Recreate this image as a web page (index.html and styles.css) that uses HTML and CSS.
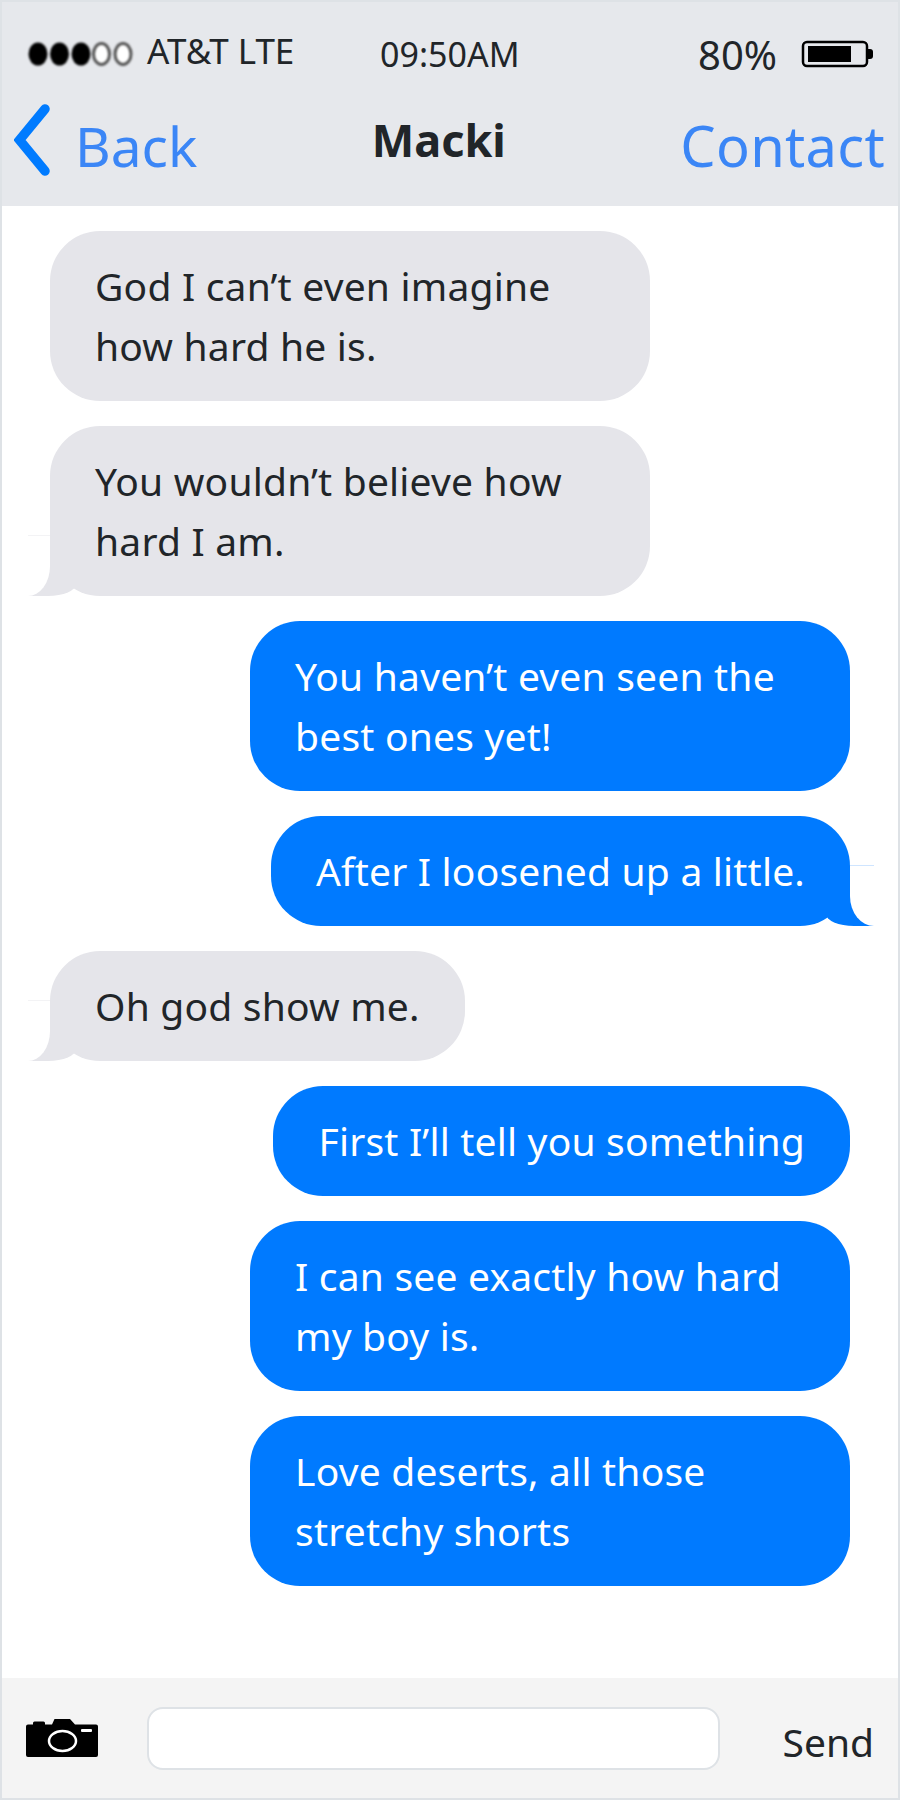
FILE: index.html
```html
<!DOCTYPE html>
<html>
<head>
<meta charset="utf-8"/>
<title>Macki</title>
<link rel="stylesheet" href="styles.css">
</head>
<body>
<div class="phone">

<div class="top">
  <div class="status">
    <div class="carrier">
      <svg class="dots" width="106" height="28" viewBox="0 0 106 28">
        <ellipse cx="11" cy="14" rx="9.5" ry="11.5"/>
        <ellipse cx="32.5" cy="14" rx="9.5" ry="11.5"/>
        <ellipse cx="54" cy="14" rx="9.5" ry="11.5"/>
        <ellipse class="off" cx="74.5" cy="14" rx="8" ry="10.5"/>
        <ellipse class="off" cx="96" cy="14" rx="8" ry="10.5"/>
      </svg>
      <span>AT&amp;T LTE</span>
    </div>
    <div class="time">09:50AM</div>
    <div class="power">
      <span>80%</span>
      <svg width="72" height="28" viewBox="0 0 72 28">
        <rect x="2" y="2" width="64" height="24" rx="4" fill="none" stroke="#000" stroke-width="2.5"/>
        <rect x="7" y="6" width="43" height="16"/>
        <path d="M67 9h2a3 3 0 0 1 3 3v4a3 3 0 0 1-3 3h-2z"/>
      </svg>
    </div>
  </div>
  <div class="nav">
    <a class="back">
      <svg width="38" height="74" viewBox="0 0 38 74">
        <path d="M31 6 L5.500 37 L31 68" fill="none" stroke="#007bff" stroke-width="9.500" stroke-linecap="round" stroke-linejoin="miter"/>
      </svg>
      <span>Back</span>
    </a>
    <div class="name">Macki</div>
    <a class="contact">Contact</a>
  </div>
</div>

<div class="chat">
  <p class="msg them">God I can’t even imagine how hard he is.</p>
  <p class="msg them tail">You wouldn’t believe how hard I am.</p>
  <p class="msg me">You haven’t even seen the best ones yet!</p>
  <p class="msg me tail">After I loosened up a little.</p>
  <p class="msg them tail">Oh god show me.</p>
  <p class="msg me">First I’ll tell you something</p>
  <p class="msg me">I can see exactly how hard my boy is.</p>
  <p class="msg me">Love deserts, all those stretchy shorts</p>
</div>

<div class="bottom">
  <svg class="camera" width="72" height="38" viewBox="0 0 72 38">
    <path d="M2 5.500h5V4a1.500 1.500 0 0 1 1.500-1.500h9A1.500 1.500 0 0 1 19 4v1.500h7L28.500 0H44l5 5.500h21a2 2 0 0 1 2 2V36a2 2 0 0 1-2 2H2a2 2 0 0 1-2-2V7.500a2 2 0 0 1 2-2z"/>
    <ellipse cx="36.500" cy="22" rx="13.500" ry="10" fill="none" stroke="#fff" stroke-width="2.500"/>
    <rect x="55" y="10" width="11" height="3" rx="1" fill="#fff"/>
  </svg>
  <input class="box" type="text">
  <div class="send">Send</div>
</div>

</div>
</body>
</html>
```

FILE: styles.css
```css
* {
   box-sizing: border-box;
}

html, body {
   margin: 0;
   padding: 0;
   background-color: white;
}

body {
   font-family: "Noto Sans", "Open Sans", sans-serif;
   color: #212529;
}

.phone {
   display: flex;
   flex-direction: column;
   width: 900px;
   height: 1800px;
   border: 2px solid #dee2e6;
}

/* top bar */
.top {
   height: 204px;
   background-color: #e6e8ec;
}

.status {
   display: grid;
   grid-template-columns: 353px 1fr auto;
   align-items: center;
   height: 96px;
   padding: 8px 25px 0 25px;
}

.carrier {
   display: flex;
   align-items: center;
   gap: 14px;
   font-size: 35px;
}

.carrier span {
   padding-bottom: 8px;
}

.dots {
   filter: blur(0.8px);
}

.dots .off {
   fill: white;
   stroke: #555;
   stroke-width: 3;
}

.time {
   font-size: 34px;
}

.power {
   display: flex;
   align-items: center;
   gap: 24px;
   font-size: 40px;
}

.nav {
   display: flex;
   justify-content: space-between;
   align-items: center;
   height: 88px;
   padding: 0 13px 0 12px;
}

.back {
   display: flex;
   align-items: center;
   gap: 23px;
}

.back svg {
   margin-bottom: 4px;
}

.back span {
   padding-top: 6px;
}

.back, .contact {
   font-size: 55px;
   color: #3b86f6;
}

.contact {
   padding-top: 6px;
   font-size: 56px;
   letter-spacing: 0.3px;
}

.name {
   font-size: 45px;
   font-weight: bold;
   padding-bottom: 6px;
}

/* messages */
.chat {
   flex: 1;
   display: flex;
   flex-direction: column;
   gap: 25px;
   padding: 25px 48px 0;
}

.msg {
   position: relative;
   width: fit-content;
   max-width: 600px;
   margin: 0;
   padding: 25px 45px;
   border-radius: 50px;
   font-size: 39px;
   line-height: 60px;
   letter-spacing: 0.2px;
}

.them {
   align-self: flex-start;
   background-color: #e5e5ea;
}

.me {
   align-self: flex-end;
   background-color: #007aff;
   color: white;
}

/* bubble tail */
.tail::before, .tail::after {
   content: "";
   position: absolute;
   bottom: 0;
   height: 60px;
}

.them.tail::before {
   left: -22px;
   width: 48px;
   border-bottom-right-radius: 28px 12px;
   background-color: #e5e5ea;
}

.them.tail::after {
   left: -22px;
   width: 22px;
   background-color: white;
   border-top: 1px solid #f3f3f5;
   border-bottom-right-radius: 22px 30px;
}

.me.tail::before {
   right: -24px;
   width: 48px;
   border-bottom-left-radius: 28px 12px;
   background-color: #007aff;
}

.me.tail::after {
   right: -24px;
   width: 24px;
   background-color: white;
   border-top: 1px solid #cfe5ff;
   border-bottom-left-radius: 24px 30px;
}

/* bottom bar */
.bottom {
   display: flex;
   align-items: center;
   height: 120px;
   padding: 0 24px;
   background-color: #f4f4f4;
}

.camera {
   flex: none;
}

.box {
   width: 573px;
   height: 63px;
   margin-left: 49px;
   border: 2px solid #dee2e6;
   border-radius: 16px;
   background-color: white;
}

.send {
   margin-left: auto;
   font-size: 39px;
   padding-top: 6px;
}
```
